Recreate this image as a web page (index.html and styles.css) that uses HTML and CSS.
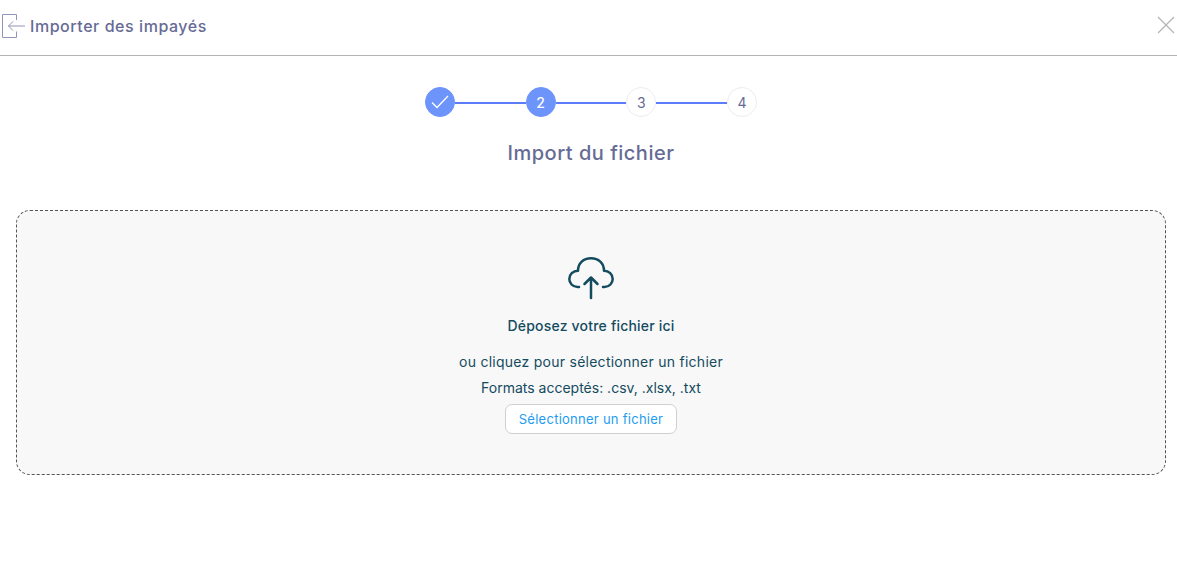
FILE: index.html
```html
<!DOCTYPE html>
<html lang="en">
<head>
    <meta charset="UTF-8">
    <meta name="viewport" content="width=device-width, initial-scale=1.0">
    <title>Importer des impayés</title>
    <link rel="stylesheet" href="styles.css">
</head>
<body>
    <header class="header">
        <div class="header-title">
            <svg class="header-icon" width="26" height="26" viewBox="0 0 26 26" fill="none" stroke="#8f94b8" stroke-width="1">
                <path d="M16.5 7V1.500H2.500V24.500H16.500V18.500" />
                <path d="M25 13H8.500M13 8.500L8.500 13L13 17.500" />
            </svg>
            <span>Importer des impayés</span>
        </div>
        <svg class="close-icon" width="18" height="18" viewBox="0 0 18 18" stroke="#b4b4b4" stroke-width="1.2">
            <path d="M1 1L17 17M17 1L1 17" />
        </svg>
    </header>

    <main class="content">
        <div class="stepper">
            <div class="step step-active">
                <svg width="18" height="14" viewBox="0 0 18 14" fill="none" stroke="#fff" stroke-width="1.3">
                    <path d="M1 7.500L6 12.500L17 1" />
                </svg>
            </div>
            <div class="step-line"></div>
            <div class="step step-active">2</div>
            <div class="step-line"></div>
            <div class="step">3</div>
            <div class="step-line"></div>
            <div class="step">4</div>
        </div>

        <h2 class="step-title">Import du fichier</h2>

        <div class="dropzone">
            <svg class="upload-icon" width="46" height="44" viewBox="0 0 46 44" fill="none" stroke="#134b5f" stroke-width="2.5" stroke-linecap="round" stroke-linejoin="round">
                <path d="M11 31H9.500C4.500 31 1.300 27 1.300 23C1.300 18.500 5 14.800 10 14.800C10 7 15.500 2.300 23 2.300C30.500 2.300 36 7 36 14.800C41 14.800 44.700 18.500 44.700 23C44.700 27 41.500 31 36.500 31H35" />
                <path d="M23 42V21.500M16.500 28L23 21.500L29.500 28" />
            </svg>
            <p class="drop-title">Déposez votre fichier ici</p>
            <p class="drop-text drop-or">ou cliquez pour sélectionner un fichier</p>
            <p class="drop-text drop-formats">Formats acceptés: .csv, .xlsx, .txt</p>
            <button class="select-btn">Sélectionner un fichier</button>
        </div>
    </main>
</body>
</html>
```

FILE: styles.css
```css
body {
    margin: 0;
    font-family: Inter, "Open Sans", sans-serif;
    background-color: #fff;
}
.header {
    height: 55px;
    border-bottom: 1px solid #b3b3b3;
    display: flex;
    align-items: center;
    justify-content: space-between;
    padding: 0 2px 0 0;
}
.header-title {
    display: flex;
    align-items: center;
    color: #666b95;
    font-size: 16px;
    font-weight: 500;
    letter-spacing: 0.55px;
}
.header-icon {
    margin: 0 4px 3px 0;
}
.header-title span {
    margin-bottom: 4px;
}
.close-icon {
    margin: 0 0 6px 0;
}
.content {
    padding: 31px 11px 0 16px;
}
.stepper {
    display: flex;
    align-items: center;
    justify-content: center;
}
.step {
    width: 30px;
    height: 30px;
    box-sizing: border-box;
    border: 1px solid #ececf2;
    border-radius: 50%;
    display: flex;
    align-items: center;
    justify-content: center;
    color: #666b95;
    font-size: 14px;
}
.step-active {
    background-color: #6c94fb;
    border-color: #6c94fb;
    color: #fff;
    font-weight: 500;
}
.step-line {
    width: 70.67px;
    height: 2px;
    margin-top: 2px;
    background-color: #5c7cfa;
}
.step-title {
    margin: 20px 0 0;
    height: 33px;
    line-height: 33px;
    text-align: center;
    color: #666b95;
    font-size: 20px;
    font-weight: 500;
    letter-spacing: 0.5px;
}
.dropzone {
    margin-top: 40px;
    height: 265px;
    box-sizing: border-box;
    border: 1px dashed #555;
    border-radius: 14px;
    background-color: #f8f8f8;
    display: flex;
    flex-direction: column;
    align-items: center;
    padding-top: 45px;
    color: #134b5f;
}
.upload-icon {
    flex-shrink: 0;
}
.drop-title {
    margin: 16px 0 0;
    font-size: 14px;
    line-height: 20px;
    font-weight: 500;
    letter-spacing: 0.2px;
}
.drop-text {
    margin: 0;
    font-size: 14px;
    line-height: 20px;
}
.drop-or {
    margin-top: 16px;
    letter-spacing: 0.26px;
}
.drop-formats {
    margin-top: 6px;
}
.select-btn {
    margin-top: 6px;
    width: 172px;
    height: 30px;
    background: #fff;
    border: 1px solid #d0d0d0;
    border-radius: 7px;
    color: #1e9cf0;
    font-family: inherit;
    font-size: 13px;
    letter-spacing: 0.26px;
    padding: 0;
}
```
